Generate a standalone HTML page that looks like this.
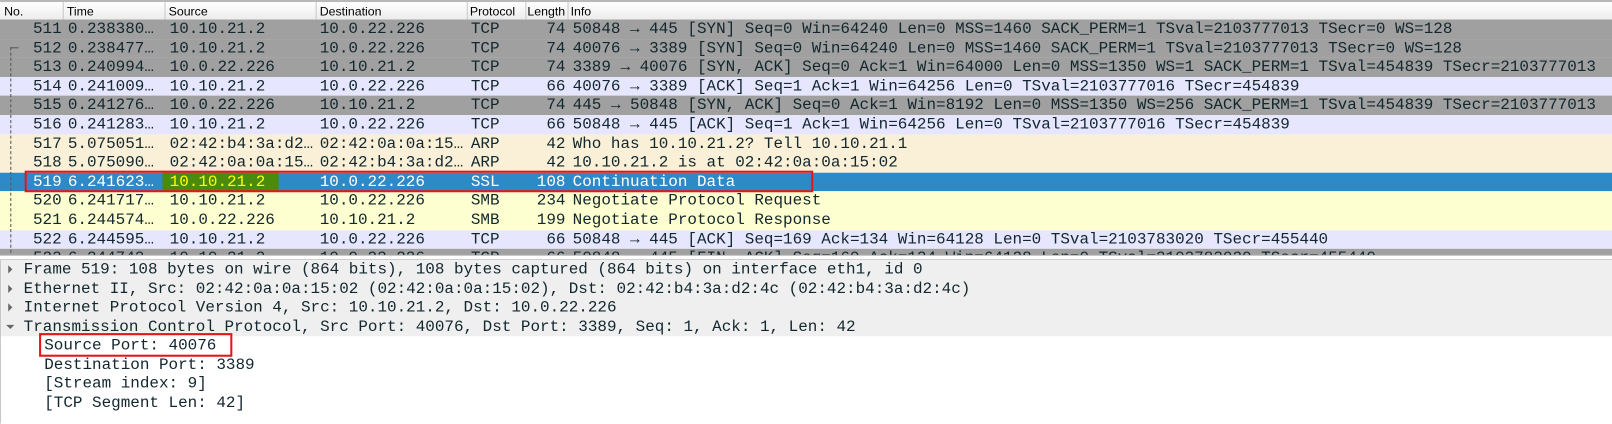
<!DOCTYPE html>
<html><head><meta charset="utf-8"><style>
*{margin:0;padding:0;box-sizing:border-box}
html,body{width:1612px;height:412px;overflow:hidden;background:#fff}
#w{position:absolute;left:0;top:0;width:1612px;height:412px;transform:scale(1.0281);transform-origin:0 0;font-family:"Liberation Mono",monospace;font-size:15.5px;color:#12272e}
.hdr{position:absolute;left:0;top:0;width:1612px;height:20px;border-top:2px solid #b8b8b8;background:linear-gradient(#ffffff,#ececec);border-bottom:1px solid #c8c8c8;font-family:"Liberation Sans",sans-serif;font-size:12px;color:#000}
.hdr span{position:absolute;top:2px}
.hdr i{position:absolute;top:0;width:1px;height:18px;background:#c8c8c8}
.r{position:absolute;left:0;width:1612px;height:18.6px;line-height:18.6px;white-space:pre}
.r span{position:absolute;top:0}
.g{background:#a0a0a0}.l{background:#e7e6ff}.a{background:#faf0d7}.s{background:#feffd0}.b{background:#2e8ac7;color:#fff}
.d{position:absolute;left:0;width:1612px;height:18.5px;line-height:18.5px;white-space:pre}
.tri{position:absolute;left:8px;width:0;height:0}
</style></head><body><div id="w">
<div class="hdr">
<span style="left:4px">No.</span><i style="left:61px"></i>
<span style="left:65px">Time</span><i style="left:160px"></i>
<span style="left:164px">Source</span><i style="left:307px"></i>
<span style="left:311px">Destination</span><i style="left:454px"></i>
<span style="left:457px">Protocol</span><i style="left:511px"></i>
<span style="left:513px;width:38px;overflow:hidden;white-space:nowrap">Length</span><i style="left:552px"></i>
<span style="left:555px">Info</span>
</div>

<div class="r g" style="top:19px"><span style="right:1552px">511</span><span style="left:66px">0.238380…</span><span style="left:165px">10.10.21.2</span><span style="left:311px">10.0.22.226</span><span style="left:458px">TCP</span><span style="right:1062px">74</span><span style="left:557px">50848 → 445 [SYN] Seq=0 Win=64240 Len=0 MSS=1460 SACK_PERM=1 TSval=2103777013 TSecr=0 WS=128</span></div>
<div class="r g" style="top:37.6px"><span style="right:1552px">512</span><span style="left:66px">0.238477…</span><span style="left:165px">10.10.21.2</span><span style="left:311px">10.0.22.226</span><span style="left:458px">TCP</span><span style="right:1062px">74</span><span style="left:557px">40076 → 3389 [SYN] Seq=0 Win=64240 Len=0 MSS=1460 SACK_PERM=1 TSval=2103777013 TSecr=0 WS=128</span></div>
<div class="r g" style="top:56.2px"><span style="right:1552px">513</span><span style="left:66px">0.240994…</span><span style="left:165px">10.0.22.226</span><span style="left:311px">10.10.21.2</span><span style="left:458px">TCP</span><span style="right:1062px">74</span><span style="left:557px">3389 → 40076 [SYN, ACK] Seq=0 Ack=1 Win=64000 Len=0 MSS=1350 WS=1 SACK_PERM=1 TSval=454839 TSecr=2103777013</span></div>
<div class="r l" style="top:74.8px"><span style="right:1552px">514</span><span style="left:66px">0.241009…</span><span style="left:165px">10.10.21.2</span><span style="left:311px">10.0.22.226</span><span style="left:458px">TCP</span><span style="right:1062px">66</span><span style="left:557px">40076 → 3389 [ACK] Seq=1 Ack=1 Win=64256 Len=0 TSval=2103777016 TSecr=454839</span></div>
<div class="r g" style="top:93.4px"><span style="right:1552px">515</span><span style="left:66px">0.241276…</span><span style="left:165px">10.0.22.226</span><span style="left:311px">10.10.21.2</span><span style="left:458px">TCP</span><span style="right:1062px">74</span><span style="left:557px">445 → 50848 [SYN, ACK] Seq=0 Ack=1 Win=8192 Len=0 MSS=1350 WS=256 SACK_PERM=1 TSval=454839 TSecr=2103777013</span></div>
<div class="r l" style="top:112px"><span style="right:1552px">516</span><span style="left:66px">0.241283…</span><span style="left:165px">10.10.21.2</span><span style="left:311px">10.0.22.226</span><span style="left:458px">TCP</span><span style="right:1062px">66</span><span style="left:557px">50848 → 445 [ACK] Seq=1 Ack=1 Win=64256 Len=0 TSval=2103777016 TSecr=454839</span></div>
<div class="r a" style="top:130.6px"><span style="right:1552px">517</span><span style="left:66px">5.075051…</span><span style="left:165px">02:42:b4:3a:d2…</span><span style="left:311px">02:42:0a:0a:15…</span><span style="left:458px">ARP</span><span style="right:1062px">42</span><span style="left:557px">Who has 10.10.21.2? Tell 10.10.21.1</span></div>
<div class="r a" style="top:149.2px"><span style="right:1552px">518</span><span style="left:66px">5.075090…</span><span style="left:165px">02:42:0a:0a:15…</span><span style="left:311px">02:42:b4:3a:d2…</span><span style="left:458px">ARP</span><span style="right:1062px">42</span><span style="left:557px">10.10.21.2 is at 02:42:0a:0a:15:02</span></div>
<div class="r b" style="top:167.8px"><span style="left:158px;width:113px;height:18.6px;background:#4a8a0c"></span><span style="right:1552px">519</span><span style="left:66px">6.241623…</span><span style="left:165px;color:#ffff00">10.10.21.2</span><span style="left:311px">10.0.22.226</span><span style="left:458px">SSL</span><span style="right:1062px">108</span><span style="left:557px">Continuation Data</span></div>
<div class="r s" style="top:186.4px"><span style="right:1552px">520</span><span style="left:66px">6.241717…</span><span style="left:165px">10.10.21.2</span><span style="left:311px">10.0.22.226</span><span style="left:458px">SMB</span><span style="right:1062px">234</span><span style="left:557px">Negotiate Protocol Request</span></div>
<div class="r s" style="top:205px"><span style="right:1552px">521</span><span style="left:66px">6.244574…</span><span style="left:165px">10.0.22.226</span><span style="left:311px">10.10.21.2</span><span style="left:458px">SMB</span><span style="right:1062px">199</span><span style="left:557px">Negotiate Protocol Response</span></div>
<div class="r l" style="top:223.6px"><span style="right:1552px">522</span><span style="left:66px">6.244595…</span><span style="left:165px">10.10.21.2</span><span style="left:311px">10.0.22.226</span><span style="left:458px">TCP</span><span style="right:1062px">66</span><span style="left:557px">50848 → 445 [ACK] Seq=169 Ack=134 Win=64128 Len=0 TSval=2103783020 TSecr=455440</span></div>
<div class="r g" style="top:242.2px;height:6px;overflow:hidden"><span style="right:1552px">523</span><span style="left:66px">6.244742…</span><span style="left:165px">10.10.21.2</span><span style="left:311px">10.0.22.226</span><span style="left:458px">TCP</span><span style="right:1062px">66</span><span style="left:557px">50848 → 445 [FIN, ACK] Seq=169 Ack=134 Win=64128 Len=0 TSval=2103783020 TSecr=455440</span></div>

<div style="position:absolute;left:10px;top:46px;width:0;height:200px;border-left:1px dashed #555"></div>
<div style="position:absolute;left:10px;top:46px;width:8px;height:1px;background:#555"></div>

<div style="position:absolute;left:24px;top:166px;width:767px;height:21px;border:2px solid #e8141a"></div>

<div style="position:absolute;left:0;top:248px;width:1612px;height:5px;background:#fff;border-top:1px solid #c8c8c8;border-bottom:1px solid #c8c8c8"></div>
<div style="position:absolute;left:0;top:253px;width:1px;height:159px;background:#c8c8c8"></div>
<div style="position:absolute;left:1px;top:253px;width:1611px;height:74px;background:#efefef"></div>

<div class="d" style="top:253px"><div class="tri" style="top:5px;border-left:4px solid #666;border-top:4px solid transparent;border-bottom:4px solid transparent"></div><span style="position:absolute;left:23px">Frame 519: 108 bytes on wire (864 bits), 108 bytes captured (864 bits) on interface eth1, id 0</span></div>
<div class="d" style="top:271.5px"><div class="tri" style="top:5px;border-left:4px solid #666;border-top:4px solid transparent;border-bottom:4px solid transparent"></div><span style="position:absolute;left:23px">Ethernet II, Src: 02:42:0a:0a:15:02 (02:42:0a:0a:15:02), Dst: 02:42:b4:3a:d2:4c (02:42:b4:3a:d2:4c)</span></div>
<div class="d" style="top:290px"><div class="tri" style="top:5px;border-left:4px solid #666;border-top:4px solid transparent;border-bottom:4px solid transparent"></div><span style="position:absolute;left:23px">Internet Protocol Version 4, Src: 10.10.21.2, Dst: 10.0.22.226</span></div>
<div class="d" style="top:308.5px"><div class="tri" style="top:7px;left:6px;border-top:4px solid #666;border-left:4px solid transparent;border-right:4px solid transparent"></div><span style="position:absolute;left:23px">Transmission Control Protocol, Src Port: 40076, Dst Port: 3389, Seq: 1, Ack: 1, Len: 42</span></div>
<div class="d" style="top:327px"><span style="position:absolute;left:43px">Source Port: 40076</span></div>
<div class="d" style="top:345.5px"><span style="position:absolute;left:43px">Destination Port: 3389</span></div>
<div class="d" style="top:364px"><span style="position:absolute;left:43px">[Stream index: 9]</span></div>
<div class="d" style="top:382.5px"><span style="position:absolute;left:43px">[TCP Segment Len: 42]</span></div>

<div style="position:absolute;left:38px;top:324px;width:188px;height:23px;border:2px solid #e8141a"></div>
</div></body></html>
